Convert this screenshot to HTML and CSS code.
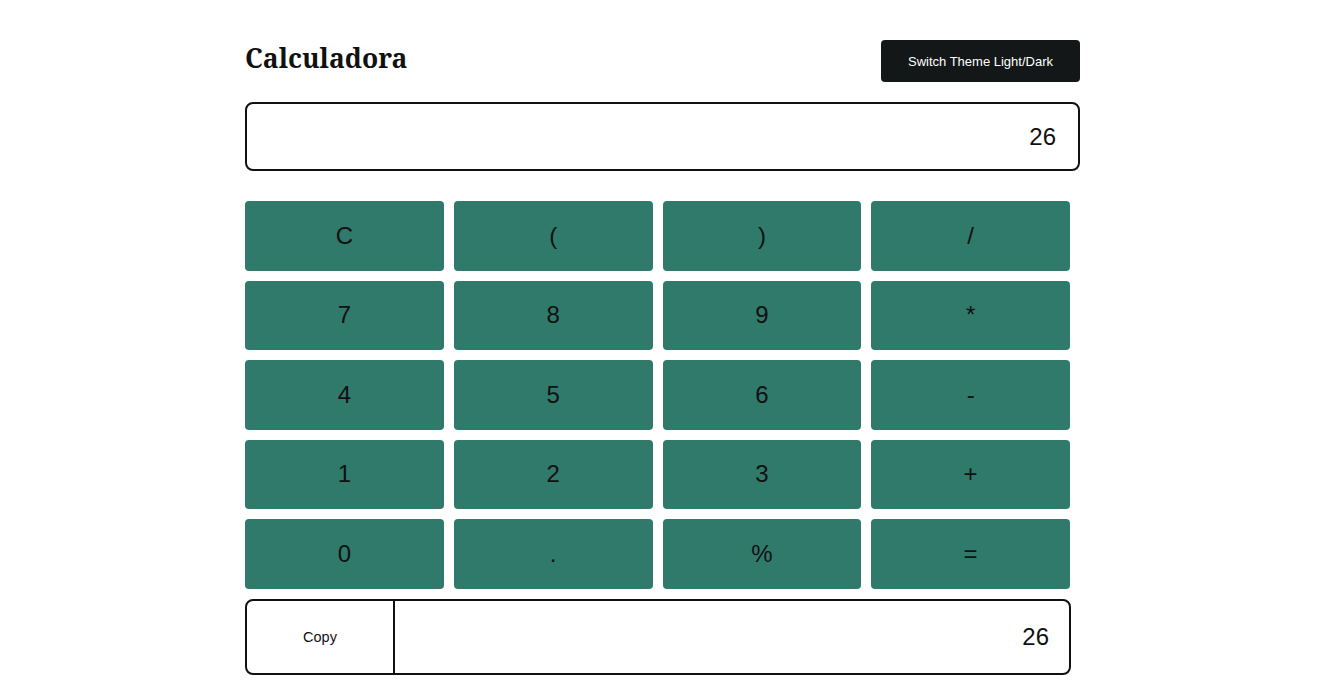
FILE: index.html
```html
<!DOCTYPE html>
<html lang="es">
<head>
<meta charset="utf-8">
<title>Calculadora</title>
<link rel="stylesheet" href="styles.css">
</head>
<body>
<main class="calc">
  <header class="header">
    <h1 class="title">Calculadora</h1>
    <button class="theme-btn">Switch Theme Light/Dark</button>
  </header>
  <div class="display">26</div>
  <div class="keys">
    <button class="key">C</button>
    <button class="key">(</button>
    <button class="key">)</button>
    <button class="key">/</button>
    <button class="key">7</button>
    <button class="key">8</button>
    <button class="key">9</button>
    <button class="key">*</button>
    <button class="key">4</button>
    <button class="key">5</button>
    <button class="key">6</button>
    <button class="key">-</button>
    <button class="key">1</button>
    <button class="key">2</button>
    <button class="key">3</button>
    <button class="key">+</button>
    <button class="key">0</button>
    <button class="key">.</button>
    <button class="key">%</button>
    <button class="key">=</button>
  </div>
  <div class="result">
    <button class="copy-btn">Copy</button>
    <div class="result-value">26</div>
  </div>
</main>
</body>
</html>
```
FILE: styles.css
```css
* { box-sizing: border-box; }
html, body { margin: 0; padding: 0; background: #fff; }
body { font-family: "Liberation Sans", Arial, sans-serif; color: #111; }
.calc { width: 835px; margin: 0 auto; padding-top: 40px; }
.header { display: flex; justify-content: space-between; align-items: center; height: 42px; }
.title { margin: 0 0 5px 0; font-family: "Noto Serif", "DejaVu Serif", "Liberation Serif", serif; font-weight: 700; font-size: 26.5px; line-height: 1.2; color: #111; }
.theme-btn { width: 199px; height: 42px; background: #131718; color: #fff; border: none; border-radius: 4px; font-family: "Liberation Sans", Arial, sans-serif; font-size: 13px; cursor: pointer; padding: 0; }
.display { margin-top: 20px; height: 69px; border: 2px solid #111; border-radius: 8px; display: flex; align-items: center; justify-content: flex-end; padding-right: 22px; font-size: 24px; }
.keys { margin-top: 30px; width: 825px; display: grid; grid-template-columns: repeat(4, 1fr); grid-auto-rows: 69.5px; column-gap: 10px; row-gap: 10px; }
.key { background: #307a6b; border: none; border-radius: 4px; font-family: "Liberation Sans", Arial, sans-serif; font-size: 24px; color: #111; padding: 0; cursor: pointer; }
.result { margin-top: 10px; width: 826px; height: 76px; border: 2px solid #111; border-radius: 8px; display: flex; }
.copy-btn { width: 148px; background: transparent; border: none; border-right: 2px solid #111; font-family: "Liberation Sans", Arial, sans-serif; font-size: 14.5px; color: #111; padding: 0; }
.result-value { flex: 1; display: flex; align-items: center; justify-content: flex-end; padding-right: 20px; font-size: 24px; }
```
